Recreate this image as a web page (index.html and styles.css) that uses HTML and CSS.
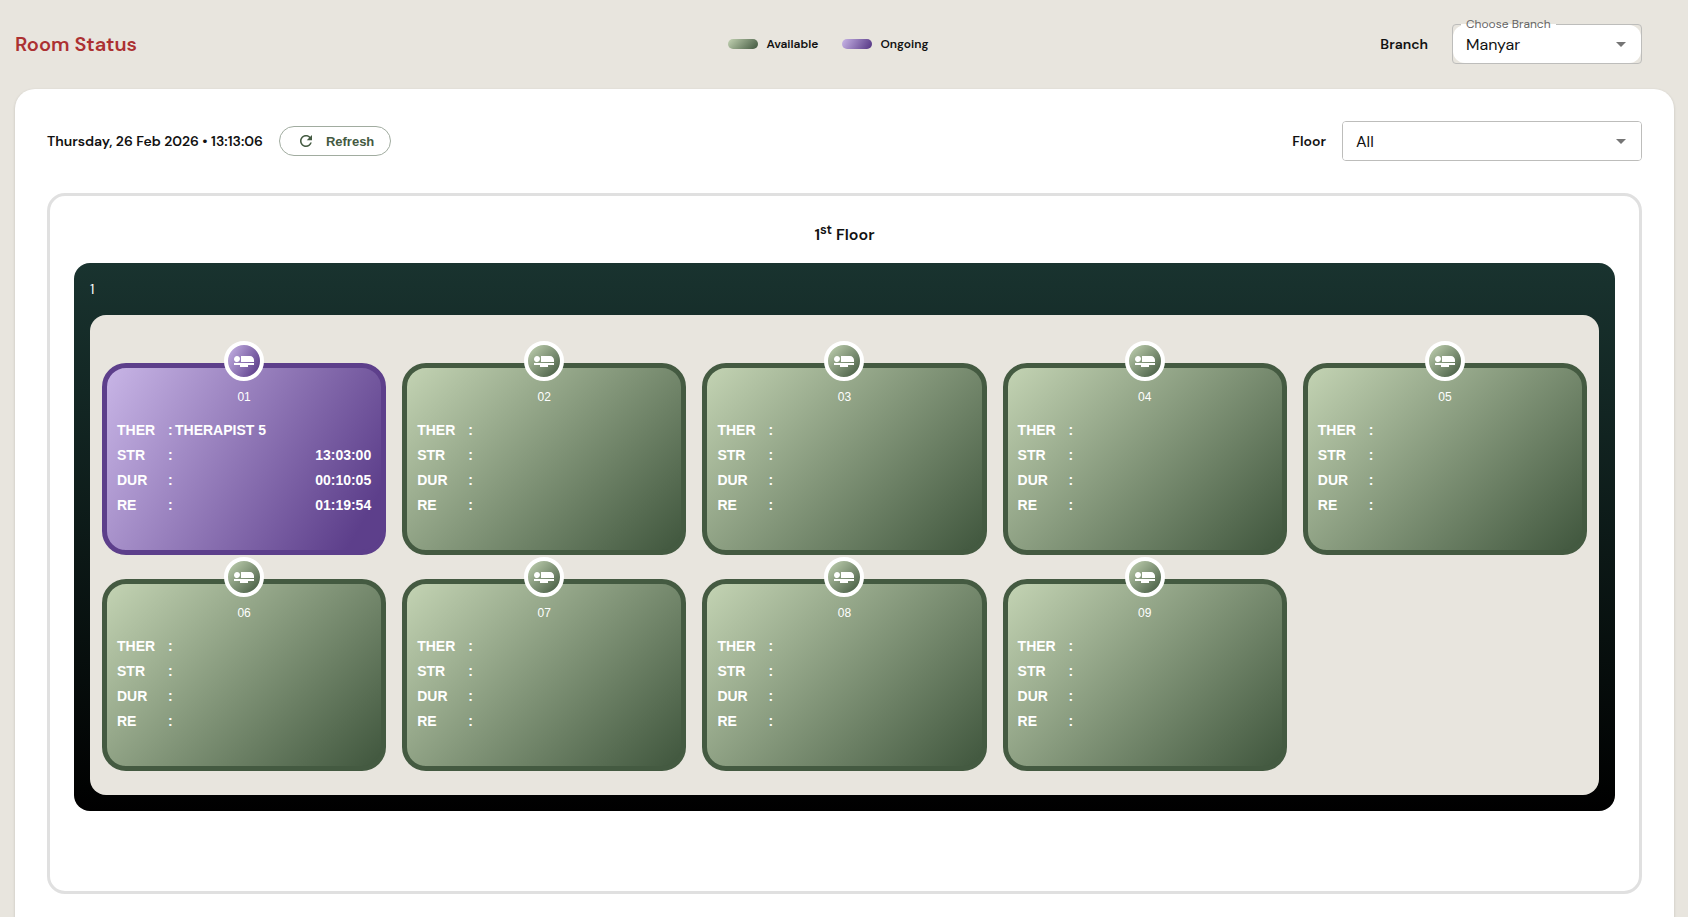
FILE: index.html
```html
<!DOCTYPE html>
<html lang="en">
<head>
<meta charset="utf-8">
<meta name="viewport" content="width=device-width, initial-scale=1">
<title>Room Status</title>
<link rel="stylesheet" href="styles.css">
</head>
<body>
<svg class="sprite" aria-hidden="true">
  <symbol id="bed" viewBox="0 0 24 24"><path d="M22 11v2H9V7h9c2.21 0 4 1.79 4 4zM2 14v2h6v2h8v-2h6v-2H2zm5.14-1.9c1.16-1.19 1.14-3.08-.04-4.24-1.19-1.16-3.08-1.14-4.24.04-1.16 1.19-1.14 3.08.04 4.24 1.19 1.16 3.08 1.14 4.24-.04z"/></symbol>
  <symbol id="arrow" viewBox="0 0 24 24"><path d="M7 10l5 5 5-5z"/></symbol>
  <symbol id="reload" viewBox="0 0 24 24"><path d="M17.65 6.35C16.2 4.9 14.21 4 12 4c-4.42 0-7.99 3.58-7.99 8s3.57 8 7.99 8c3.73 0 6.84-2.55 7.73-6h-2.08c-.82 2.33-3.04 4-5.65 4-3.31 0-6-2.69-6-6s2.69-6 6-6c1.66 0 3.14.69 4.22 1.78L13 11h7V4l-2.35 2.35z"/></symbol>
</svg>
<header class="topbar">
  <h1 class="title">Room Status</h1>
  <ul class="legend">
    <li class="legend-item"><span class="swatch available"></span>Available</li>
    <li class="legend-item"><span class="swatch ongoing"></span>Ongoing</li>
  </ul>
  <div class="field branch-field">
    <span class="field-name">Branch</span>
    <div class="select-box branch-box">
      <label class="float-label" for="branch">Choose Branch</label>
      <select class="select" id="branch"><option>Manyar</option></select>
      <svg class="arrow" aria-hidden="true"><use href="#arrow"/></svg>
    </div>
  </div>
</header>
<main class="card">
  <div class="toolbar">
    <time class="clock">Thursday, 26 Feb 2026 • 13:13:06</time>
    <button class="refresh" type="button"><svg class="reload" aria-hidden="true"><use href="#reload"/></svg>Refresh</button>
    <div class="field floor-field">
      <label class="field-name" for="floor">Floor</label>
      <div class="select-box floor-box">
        <select class="select" id="floor"><option>All</option></select>
        <svg class="arrow" aria-hidden="true"><use href="#arrow"/></svg>
      </div>
    </div>
  </div>
  <section class="floor">
    <h2 class="floor-title">1<sup>st</sup> Floor</h2>
    <div class="zone">
      <div class="zone-name">1</div>
      <div class="rooms" id="rooms"></div>
    </div>
  </section>
</main>
<script src="rooms.js"></script>
</body>
</html>
```
FILE: styles.css
```css
* { box-sizing: border-box; }

body {
  margin: 0;
  background: #e8e5de;
  color: #111;
  font-family: "DM Sans", Inter, "Liberation Sans", sans-serif;
  font-size: 16px;
}

.sprite { position: absolute; width: 0; height: 0; }

.topbar {
  display: grid;
  grid-template-columns: 1fr auto 1fr;
  align-items: center;
  padding: 24px 46px 24px 15px;
}

.title {
  margin: 0;
  color: #ac3132;
  font-size: 20px;
  font-weight: 600;
  line-height: 28px;
}

.legend {
  display: flex;
  gap: 24px;
  margin: 0;
  padding: 0;
  list-style: none;
  font-size: 12px;
  font-weight: 600;
  line-height: 16px;
}

.legend-item { display: flex; align-items: center; gap: 8px; }
.swatch { width: 30px; height: 10px; border-radius: 5px; }
.available { background: linear-gradient(135deg, #c3d3b3, #445a41 97%); }
.ongoing { background: linear-gradient(120deg, #c8b5e6, #5d3f8b 91%); }

.field { display: flex; align-items: center; }
.branch-field { justify-self: end; gap: 24px; }
.floor-field { margin-left: auto; gap: 16px; }
.field-name { font-size: 14px; font-weight: 600; }

.select-box {
  position: relative;
  border: 1px solid #bdbdbb;
  border-radius: 4px;
}
.branch-box { width: 190px; }
.floor-box { width: 300px; }

.select {
  display: block;
  width: 100%;
  height: 38px;
  padding: 0 32px 0 13px;
  border: 0;
  border-radius: 3px;
  appearance: none;
  background: #fff;
  color: #111;
  font-family: inherit;
  font-size: 16px;
}
.branch-box .select { border-radius: 12px; }

.arrow {
  position: absolute;
  top: 7px;
  right: 8px;
  width: 24px;
  height: 24px;
  fill: #757575;
  pointer-events: none;
}

.float-label {
  position: absolute;
  top: -9px;
  left: 8px;
  padding: 0 5px;
  background: linear-gradient(#e8e5de 8px, #fff 8px);
  color: #666;
  font-size: 12px;
  line-height: 16px;
}

.card {
  margin: 1px 14px 0 15px;
  padding: 32px 32px 64px;
  border-radius: 20px;
  background: #fff;
  box-shadow: 0 1px 3px rgba(0, 0, 0, .16);
}

.toolbar { display: flex; align-items: center; gap: 16px; }
.clock { font-size: 14px; font-weight: 600; }

.refresh {
  display: flex;
  align-items: center;
  gap: 11px;
  height: 30px;
  padding: 0 16px 0 17px;
  border: 1px solid #a1aca0;
  border-radius: 15px;
  background: #fff;
  color: #445a41;
  font-family: "Liberation Sans", Arial, sans-serif;
  font-size: 13px;
  font-weight: 700;
}
.reload { width: 18px; height: 18px; fill: currentColor; }

.floor {
  margin-top: 32px;
  padding: 24px 24px 80px;
  border: 3px solid #e0e0e0;
  border-radius: 18px;
}

.floor-title {
  margin: 0 0 14px;
  font-size: 16px;
  font-weight: 600;
  line-height: 29px;
  text-align: center;
}
.floor-title sup { font-size: 13px; line-height: 0; }

.zone {
  padding: 16px;
  border-radius: 16px;
  background: linear-gradient(#19332f, #000);
}

.zone-name {
  margin-bottom: 16px;
  color: #fff;
  font-size: 14px;
  line-height: 20px;
}

.rooms {
  display: grid;
  grid-template-columns: repeat(5, 1fr);
  gap: 24px 16px;
  padding: 48px 12px 24px;
  border-radius: 16px;
  background: #e8e5de;
}

.room {
  position: relative;
  min-height: 192px;
  padding: 20px 10px;
  border: 5px solid #445a41;
  border-radius: 24px;
  color: #fff;
  font-family: "Liberation Sans", Arial, sans-serif;
}
.room.ongoing { border-color: #5d3f8b; }

.badge {
  position: absolute;
  top: -27px;
  left: calc(50% - 20px);
  display: grid;
  place-items: center;
  width: 40px;
  height: 40px;
  border: 4px solid #fff;
  border-radius: 50%;
}
.badge svg { width: 24px; height: 24px; fill: #fff; }

.room-no {
  margin: 0 0 12px;
  font-size: 12px;
  font-weight: 400;
  line-height: 18px;
  text-align: center;
}

.facts {
  width: 100%;
  border-collapse: collapse;
  font-size: 14px;
  font-weight: 700;
  line-height: 25px;
}
.facts th, .facts td { padding: 0; text-align: left; }
.facts th { width: 51px; }
.facts .colon { width: 7px; }
.facts .time { text-align: right; }
```
FILE: rooms.js
```js
const labels = ["THER", "STR", "DUR", "RE"];
const active = { "01": ["THERAPIST 5", "13:03:00", "00:10:05", "01:19:54"] };

const roomCard = (no) => {
  const values = active[no] || ["", "", "", ""];
  const state = active[no] ? "ongoing" : "available";
  const rows = labels.map((label, i) =>
    `<tr><th scope="row">${label}</th><td class="colon">:</td><td class="${i ? "time" : "name"}">${values[i]}</td></tr>`
  ).join("");
  return `<article class="room ${state}">
    <span class="badge ${state}"><svg aria-hidden="true"><use href="#bed"/></svg></span>
    <h3 class="room-no">${no}</h3>
    <table class="facts"><tbody>${rows}</tbody></table>
  </article>`;
};

document.getElementById("rooms").innerHTML =
  Array.from({ length: 9 }, (_, i) => roomCard(String(i + 1).padStart(2, "0"))).join("");
```
